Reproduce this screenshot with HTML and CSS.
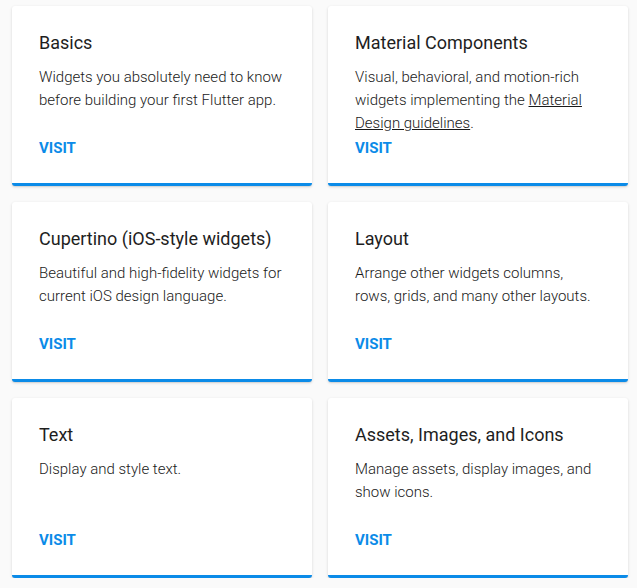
FILE: index.html
```html
<!DOCTYPE html>
<html>
<head>
<meta charset="utf-8">
<link rel="stylesheet" href="styles.css">
</head>
<body>
<div class="grid">
  <div class="card">
    <h3 class="title">Basics</h3>
    <p class="desc">Widgets you absolutely need to know before building your first Flutter app.</p>
    <div class="footer"><a class="visit">VISIT</a></div>
  </div>
  <div class="card">
    <h3 class="title">Material Components</h3>
    <p class="desc">Visual, behavioral, and motion-rich widgets implementing the <a class="link">Material Design guidelines</a>.</p>
    <div class="footer"><a class="visit">VISIT</a></div>
  </div>
  <div class="card">
    <h3 class="title">Cupertino (iOS-style widgets)</h3>
    <p class="desc">Beautiful and high-fidelity widgets for current iOS design language.</p>
    <div class="footer"><a class="visit">VISIT</a></div>
  </div>
  <div class="card">
    <h3 class="title">Layout</h3>
    <p class="desc">Arrange other widgets columns, rows, grids, and many other layouts.</p>
    <div class="footer"><a class="visit">VISIT</a></div>
  </div>
  <div class="card">
    <h3 class="title">Text</h3>
    <p class="desc">Display and style text.</p>
    <div class="footer"><a class="visit">VISIT</a></div>
  </div>
  <div class="card">
    <h3 class="title">Assets, Images, and Icons</h3>
    <p class="desc">Manage assets, display images, and show icons.</p>
    <div class="footer"><a class="visit">VISIT</a></div>
  </div>
</div>
</body>
</html>
```
FILE: styles.css
```css
html, body {
  margin: 0;
  padding: 0;
  background: #fafafa;
  font-family: Roboto, "Noto Sans", sans-serif;
}
.grid {
  display: grid;
  grid-template-columns: 300px 300px;
  gap: 16px;
  padding: 6px 0 0 12px;
}
.card {
  display: flex;
  flex-direction: column;
  box-sizing: border-box;
  height: 180px;
  background: #fff;
  border-radius: 3px;
  border-bottom: 3px solid #0b8be8;
  box-shadow: 0 1px 3px rgba(0, 0, 0, 0.14), 0 1px 1px rgba(0, 0, 0, 0.06);
  padding: 25px 27px 0 27px;
}
.title {
  margin: 0 0 11px 0;
  font-size: 18px;
  line-height: 24px;
  font-weight: 400;
  color: #1e1e1e;
}
.desc {
  margin: 0;
  font-size: 15px;
  line-height: 23px;
  font-weight: 300;
  color: #1a1a1a;
}
.link {
  color: inherit;
  text-decoration: underline;
}
.footer {
  margin-top: auto;
  padding-bottom: 25px;
  line-height: 20px;
}
.visit {
  font-size: 15px;
  font-weight: 700;
  color: #0b8be8;
}
```
